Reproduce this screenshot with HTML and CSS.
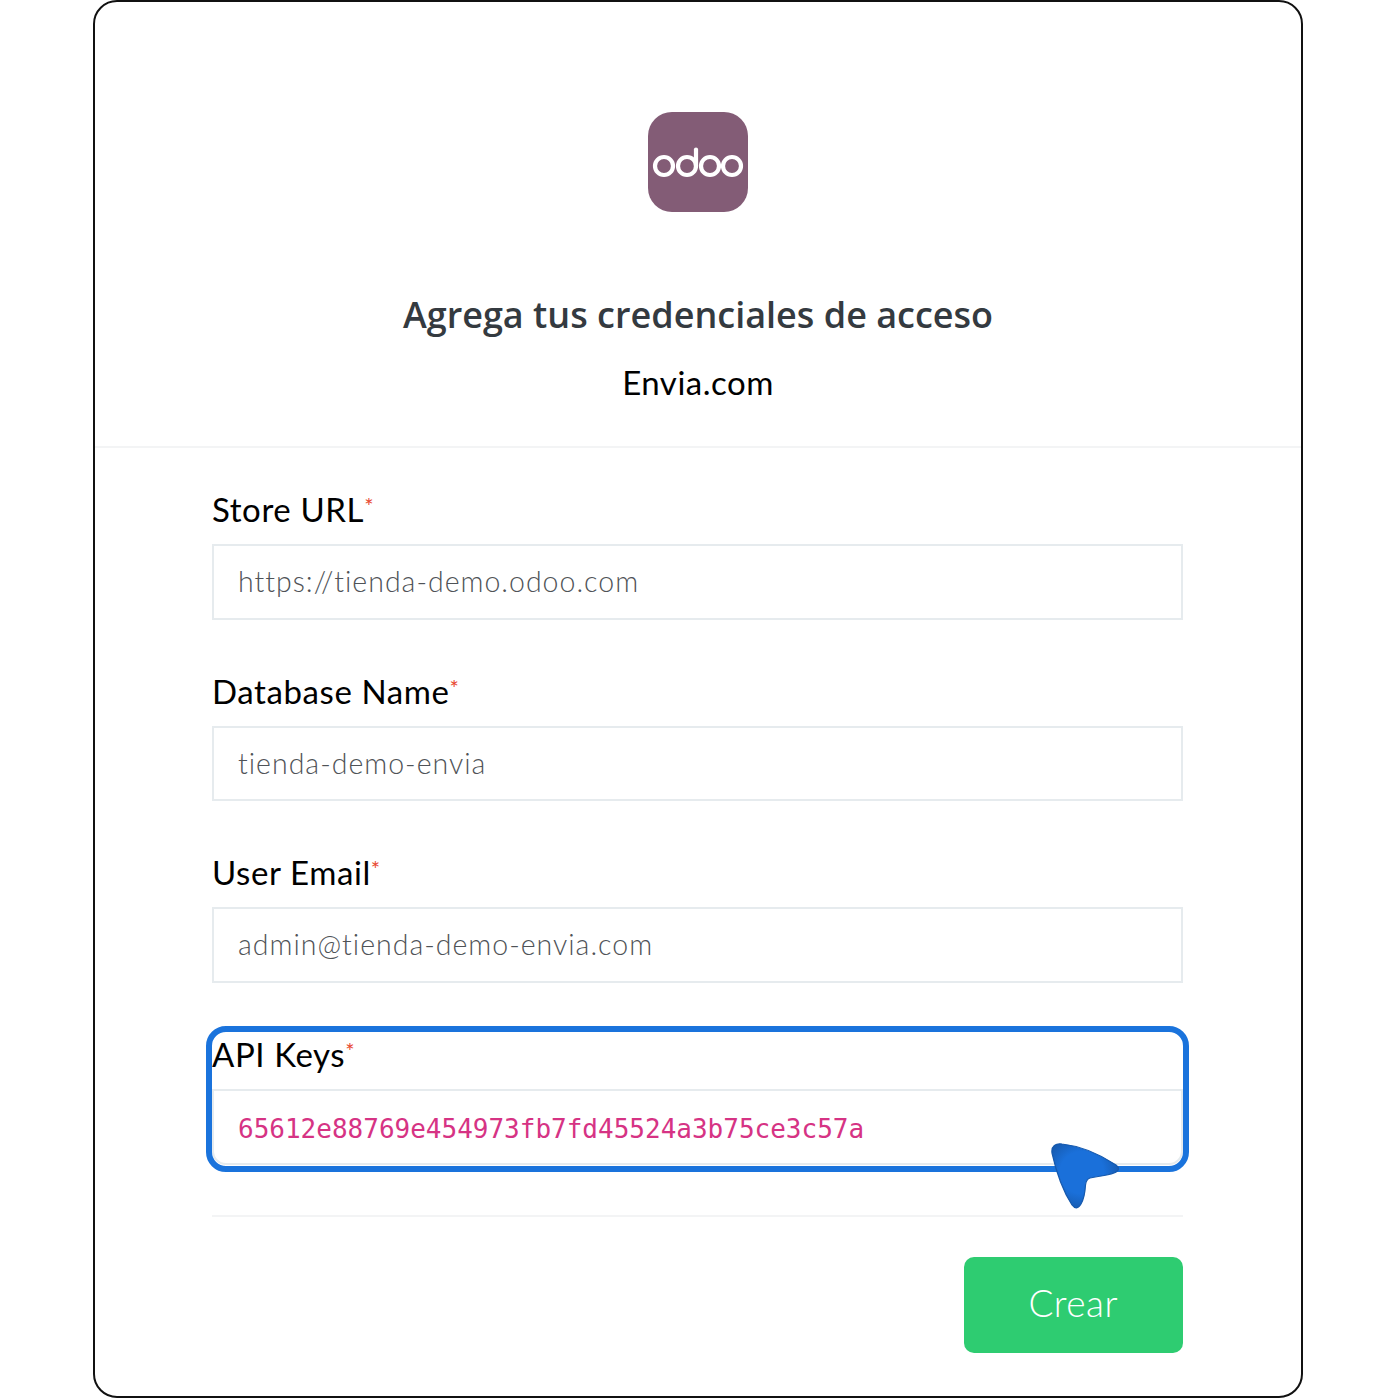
FILE: index.html
```html
<!DOCTYPE html>
<html lang="es">
<head>
  <meta charset="utf-8">
  <title>Agrega tus credenciales de acceso</title>
  <link rel="stylesheet" href="styles.css">
</head>
<body>
  <div class="frame">
    <div class="header">
      <svg class="logo" viewBox="0 0 100 100" role="img" aria-label="odoo">
        <rect width="100" height="100" rx="24" fill="#835c76"/>
        <g fill="none" stroke="#fff" stroke-width="4.2">
          <circle cx="16" cy="54" r="9"/>
          <circle cx="39" cy="54" r="9"/>
          <path d="M48 54V37.5" stroke-linecap="round"/>
          <circle cx="62" cy="54" r="9"/>
          <circle cx="84" cy="54" r="9"/>
        </g>
      </svg>
      <h1 class="title">Agrega tus credenciales de acceso</h1>
      <p class="subtitle">Envia.com</p>
    </div>

    <form class="form">
      <div class="field">
        <label class="label">Store URL<span class="req">*</span></label>
        <input class="input" placeholder="https://tienda-demo.odoo.com">
      </div>
      <div class="field">
        <label class="label">Database Name<span class="req">*</span></label>
        <input class="input" placeholder="tienda-demo-envia">
      </div>
      <div class="field">
        <label class="label">User Email<span class="req">*</span></label>
        <input class="input" placeholder="admin@tienda-demo-envia.com">
      </div>
      <div class="field field-api">
        <label class="label">API Keys<span class="req">*</span></label>
        <input class="input input-key" value="65612e88769e454973fb7fd45524a3b75ce3c57a">
        <div class="highlight"></div>
        <svg class="pointer" viewBox="0 0 70 66">
          <defs>
            <radialGradient id="pointerFill" cx="45%" cy="45%" r="60%">
              <stop offset="0.55" stop-color="#1a70da"/>
              <stop offset="1" stop-color="#1659ad"/>
            </radialGradient>
          </defs>
          <path d="M1 10C0 3 5 0 11 1C30 3 50 12 65 22C69 25 68 28 63 30C55 33 47 33 39 35C36 36 35 38 34.5 42C34 50 33 56 30 61C27 66 24 66 21 62C12 48 5 28 1 10Z" fill="url(#pointerFill)" stroke="#1659ad" stroke-width="1.2"/>
        </svg>
      </div>
      <div class="divider"></div>
      <div class="actions">
        <button class="btn" type="button">Crear</button>
      </div>
    </form>
  </div>
</body>
</html>
```

FILE: styles.css
```css
* {
  box-sizing: border-box;
}
body {
  margin: 0;
  background-color: #fff;
  font-family: "Lato", sans-serif;
  color: #000;
}
.frame {
  width: 1210px;
  height: 1398px;
  margin: 0 auto;
  border: 2px solid #111;
  border-radius: 24px;
  background-color: #fff;
}
.header {
  display: flex;
  flex-direction: column;
  align-items: center;
  padding: 110px 0 41px;
  border-bottom: 2px solid #f3f4f5;
}
.logo {
  display: block;
  width: 100px;
  height: 100px;
}
.title {
  margin: 79px 0 0;
  font-family: "Open Sans", sans-serif;
  font-size: 36px;
  font-weight: 600;
  line-height: 48px;
  color: #343a40;
}
.subtitle {
  margin: 20px 0 0;
  font-size: 33px;
  letter-spacing: 0.5px;
  line-height: 46px;
}
.form {
  padding: 38px 118px 0 117px;
}
.field {
  display: flex;
  flex-direction: column;
  margin-bottom: 48px;
}
.field-api {
  position: relative;
  margin-bottom: 50px;
}
.label {
  height: 48px;
  margin-bottom: 10px;
  font-size: 33px;
  letter-spacing: 0.6px;
  line-height: 46px;
}
.req {
  position: relative;
  top: -8px;
  font-size: 22px;
  line-height: 0;
  color: #e8482f;
}
.input {
  width: 100%;
  height: 75.7px;
  padding: 0 24px 2px;
  border: 2px solid #e6ebee;
  background-color: #fff;
  font-family: "Lato", sans-serif;
  font-size: 28.5px;
  font-weight: 300;
  letter-spacing: 1px;
  color: #4f5357;
  outline: none;
}
.input::placeholder {
  color: #4f5357;
  opacity: 1;
}
.input-key {
  padding-top: 5px;
  padding-bottom: 0;
  border-radius: 0 0 14px 14px;
  font-family: "DejaVu Sans Mono", monospace;
  font-size: 26px;
  font-weight: 400;
  letter-spacing: 0;
  color: #d63384;
}
.highlight {
  position: absolute;
  top: -5px;
  left: -6px;
  right: -6px;
  bottom: -7px;
  border: 6px solid #1a73dc;
  border-radius: 20px;
  pointer-events: none;
}
.pointer {
  position: absolute;
  left: 839px;
  top: 112px;
  width: 70px;
  height: 66px;
}
.divider {
  height: 2px;
  background-color: #f3f4f5;
}
.actions {
  display: flex;
  justify-content: flex-end;
  margin-top: 40px;
}
.btn {
  width: 219.5px;
  height: 96px;
  padding: 0 0 5px;
  border: none;
  border-radius: 10px;
  background-color: #2ecc71;
  font-family: "Lato", sans-serif;
  font-size: 37px;
  font-weight: 300;
  letter-spacing: 0.5px;
  color: #fff;
}
```
